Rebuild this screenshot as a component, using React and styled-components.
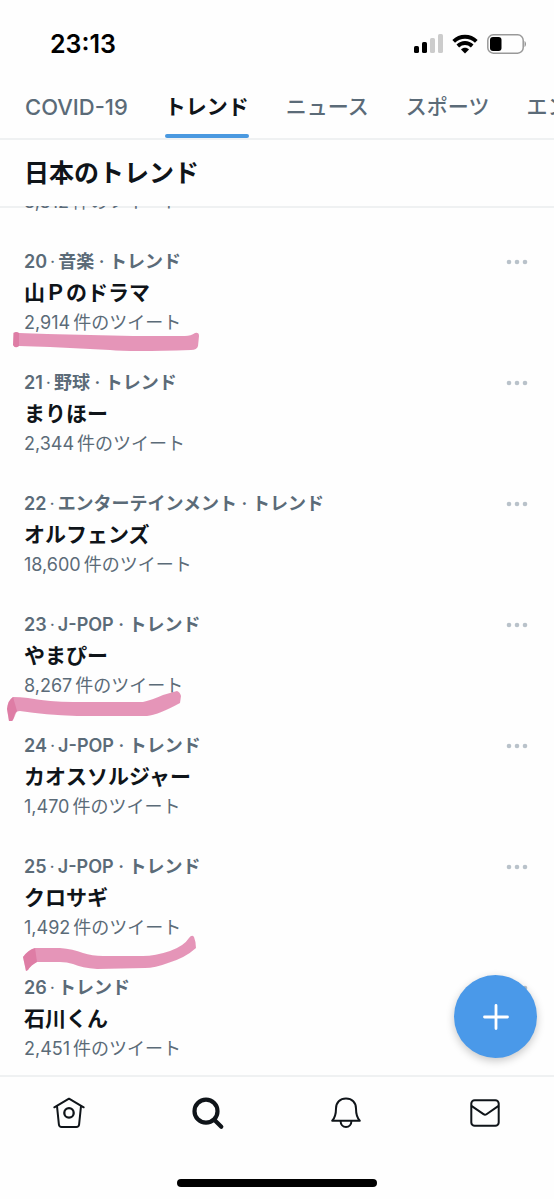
import React, { useState } from 'react';
import styled, { createGlobalStyle } from 'styled-components';

const GlobalStyle = createGlobalStyle`
  * {
    box-sizing: border-box;
  }
  body {
    margin: 0;
    background: #fefefe;
    color: #0f1419;
    font-family: Inter, 'Noto Sans CJK JP', sans-serif;
  }
  button {
    border: 0;
    padding: 0;
    background: none;
    color: inherit;
    font: inherit;
    cursor: pointer;
  }
`;

const Screen = styled.div`
  display: flex;
  flex-direction: column;
  height: 100vh;
  overflow: hidden;
`;

const StatusBar = styled.div`
  display: flex;
  align-items: center;
  justify-content: space-between;
  padding: 29px 28px 15px 50px;
`;

const Clock = styled.span`
  font-size: 25px;
  line-height: 30px;
  font-weight: 600;
  color: #000;
`;

const StatusIcons = styled.div`
  display: flex;
  align-items: center;
  gap: 9px;
`;

const Tabs = styled.nav`
  display: flex;
  flex: none;
  gap: 37px;
  height: 66px;
  padding-left: 25px;
  overflow: hidden;
  border-bottom: 2px solid #eff1f2;
`;

const Tab = styled.button`
  position: relative;
  flex: none;
  font-size: ${props => (props.$latin ? '22px' : '21px')};
  line-height: 66px;
  font-weight: ${props => (props.$active ? 700 : 500)};
  color: ${props => (props.$active ? '#0f1419' : '#5b6b78')};

  &::after {
    content: '';
    position: absolute;
    left: 0;
    right: 0;
    bottom: 0;
    height: 4px;
    border-radius: 2px;
    background: ${props => (props.$active ? '#4a99e0' : 'transparent')};
  }
`;

const Heading = styled.h1`
  flex: none;
  margin: 0;
  padding: 0 24px;
  font-size: 25px;
  line-height: 66px;
  font-weight: 700;
  border-bottom: 2px solid #eff1f2;
`;

const Main = styled.main`
  position: relative;
  display: flex;
  flex: 1;
  min-height: 0;
  margin-top: -2px;
  flex-direction: column;
  justify-content: flex-end;
  overflow: hidden;
`;

const List = styled.ul`
  display: flex;
  flex-direction: column;
  gap: 30px;
  margin: 0;
  padding: 0 0 11px;
  list-style: none;
`;

const Item = styled.li`
  position: relative;
  display: flex;
  align-items: flex-start;
  justify-content: space-between;
  padding: 0 26px 0 24px;
`;

const Meta = styled.div`
  font-size: 18px;
  line-height: 30px;
  font-weight: 600;
  color: #5b6b78;
`;

const Dot = styled.span`
  margin: 0 3px;
  font-weight: 400;
`;

const Name = styled.h2`
  margin: 0;
  font-size: 21px;
  line-height: 31px;
  font-weight: 700;
`;

const Count = styled.div`
  font-size: 18px;
  line-height: 30px;
  color: #5b6b78;
`;

const Amount = styled.span`
  margin-right: 3px;
`;

const More = styled.button`
  display: flex;
  align-items: center;
  height: 30px;
`;

const Marker = styled.svg`
  position: absolute;
  left: 0;
  top: 0;
  z-index: 1;
  overflow: visible;
  pointer-events: none;
`;

const Compose = styled.button`
  position: absolute;
  right: 17px;
  bottom: 17px;
  z-index: 2;
  display: flex;
  align-items: center;
  justify-content: center;
  width: 83px;
  height: 83px;
  border-radius: 50%;
  background: #4a99e9;
  box-shadow: 0 3px 8px rgba(0, 0, 0, 0.22);
`;

const BottomBar = styled.nav`
  display: flex;
  flex: none;
  border-top: 2px solid #eff1f2;
`;

const BottomItem = styled.button`
  display: flex;
  flex: 1;
  align-items: center;
  justify-content: center;
  height: 71px;
`;

const HomeIndicator = styled.div`
  flex: none;
  width: 36%;
  height: 8px;
  margin: 31px auto 12px;
  border-radius: 4px;
  background: #000;
`;

const tabs = [
  { label: 'COVID-19', latin: true },
  { label: 'トレンド' },
  { label: 'ニュース' },
  { label: 'スポーツ' },
  { label: 'エンタメ' },
];

const trends = [
  { amount: '8,812' },
  {
    rank: 20,
    topic: '音楽',
    name: '山Ｐのドラマ',
    amount: '2,914',
    marker: 'M14 88 Q16 86 19 88 L47 89 Q90 90 133 91 L185 91 Q191 91 195 88 Q199 87 199 91 L198 101 Q197 105 191 105 Q130 107 110 105 L50 102 L19 101 Q15 104 13 100 Z',
    cap: 'M13 88 Q16 86 19 88 L19 101 Q15 104 13 100 Z',
  },
  { rank: 21, topic: '野球', name: 'まりほー', amount: '2,344' },
  { rank: 22, topic: 'エンターテインメント', name: 'オルフェンズ', amount: '18,600' },
  {
    rank: 23,
    topic: 'J-POP',
    name: 'やまぴー',
    amount: '8,267',
    marker: 'M7 101 Q8 92 13 89 Q20 89 28 90 Q50 94 73 94 L143 94 Q152 92 163 87 L177 83 Q180 84 181 88 L180 95 Q158 107 147 108 L77 108 Q45 107 20 103 Q16 103 15 106 Q13 113 12 113 L9 113 Z',
    cap: 'M7 101 Q8 92 13 89 L17 103 Q13 113 12 113 L9 113 Z',
  },
  { rank: 24, topic: 'J-POP', name: 'カオスソルジャー', amount: '1,470' },
  {
    rank: 25,
    topic: 'J-POP',
    name: 'クロサギ',
    amount: '1,492',
    marker: 'M23 107 Q28 100 35 98 L60 98 Q73 99 83 103 Q92 106 103 106 L143 106 Q155 106 170 101 Q184 96 189 88 Q192 84 194 87 Q196 92 196 98 Q185 108 168 113 Q155 118 145 118 L97 119 Q82 118 73 114 Q67 112 60 112 L37 112 Q31 115 28 120 L26 121 Z',
    cap: 'M23 107 Q28 100 35 98 L37 112 Q31 115 28 120 L26 121 Z',
  },
  { rank: 26, name: '石川くん', amount: '2,451' },
];

const SignalIcon = () => (
  <svg width="29" height="20" viewBox="0 0 29 20" aria-hidden="true">
    <rect x="0" y="12" width="5" height="7" rx="1.6" />
    <rect x="8" y="8" width="5" height="11" rx="1.6" />
    <rect x="16" y="4" width="5" height="15" rx="1.6" fill="#ccc" />
    <rect x="24" y="0" width="5" height="19" rx="1.6" fill="#ccc" />
  </svg>
);

const WifiIcon = () => (
  <svg width="26" height="20" viewBox="0 0 26 20" aria-hidden="true">
    <g fill="none" stroke="#000" strokeWidth="3.8">
      <path d="M1.700 7.400C8 1.200 18 1.200 24.300 7.400" />
      <path d="M5.800 12c4.200-4 10.200-4 14.400 0" />
    </g>
    <path d="M13 19.600l-4-4.200c2-2.200 6-2.200 8 0z" />
  </svg>
);

const BatteryIcon = () => (
  <svg width="39" height="20" viewBox="0 0 39 20" aria-hidden="true">
    <rect x="0.8" y="0.8" width="35.4" height="18.4" rx="5.5" fill="none" stroke="#999" strokeWidth="1.5" />
    <rect x="3" y="3" width="11.5" height="14" rx="3" />
    <path d="M37.500 7c2 .8 2 5.200 0 6z" fill="#999" />
  </svg>
);

const MoreIcon = () => (
  <svg width="22" height="6" viewBox="0 0 22 6" fill="#b9c2ca" aria-hidden="true">
    <circle cx="3" cy="3" r="2.3" />
    <circle cx="11" cy="3" r="2.3" />
    <circle cx="19" cy="3" r="2.3" />
  </svg>
);

const PlusIcon = () => (
  <svg width="26" height="26" viewBox="0 0 26 26" aria-hidden="true">
    <path d="M13 1.500v23M1.500 13h23" stroke="#fff" strokeWidth="2.8" strokeLinecap="round" />
  </svg>
);

const iconProps = {
  width: 34,
  height: 34,
  viewBox: '0 0 34 34',
  fill: 'none',
  stroke: '#0f1419',
  strokeWidth: 2,
  strokeLinecap: 'round',
  strokeLinejoin: 'round',
  'aria-hidden': true,
};

const HomeIcon = () => (
  <svg {...iconProps}>
    <path d="M2.300 11.300L17 2.700l14.700 8.600" />
    <path d="M5 10.200l1.900 18.300a2.800 2.800 0 0 0 2.800 2.500h14.600a2.800 2.800 0 0 0 2.800-2.500L29 10.200" />
    <circle cx="17" cy="16.9" r="4.7" strokeWidth="2.3" />
  </svg>
);

const SearchIcon = () => (
  <svg {...iconProps}>
    <circle cx="15" cy="15.2" r="11.5" strokeWidth="4.2" />
    <path d="M24 24.400l6.300 6.300" strokeWidth="4.2" />
  </svg>
);

const BellIcon = () => (
  <svg {...iconProps}>
    <path d="M3.200 24.700C6.400 21.400 7 17.500 7 12.500C7 6.600 11 2.500 17 2.500s10 4.100 10 10c0 5 .6 8.900 3.800 12.200z" />
    <path d="M11.600 24.900c0 3.800 2.400 6 5.400 6s5.400-2.200 5.400-6" />
  </svg>
);

const MailIcon = () => (
  <svg {...iconProps}>
    <rect x="3.300" y="4.200" width="27.400" height="25.600" rx="3.400" />
    <path d="M3.800 10.200l11.700 8c1 .7 2 .7 3 0l11.700-8" />
  </svg>
);

const bottomItems = [
  { label: 'ホーム', Icon: HomeIcon },
  { label: '検索', Icon: SearchIcon },
  { label: '通知', Icon: BellIcon },
  { label: 'メッセージ', Icon: MailIcon },
];

const Trend = ({ rank, topic, name, amount, marker, cap }) => (
  <Item>
    <div>
      {rank && (
        <Meta>
          {rank}
          <Dot>·</Dot>
          {topic ? `${topic} · トレンド` : 'トレンド'}
        </Meta>
      )}
      {name && <Name>{name}</Name>}
      <Count>
        <Amount>{amount}</Amount>
        件のツイート
      </Count>
    </div>
    {rank && (
      <More aria-label="その他">
        <MoreIcon />
      </More>
    )}
    {marker && (
      <Marker width="200" height="122" viewBox="0 2 200 122" aria-hidden="true">
        <path d={marker} fill="#df7ba6" fillOpacity="0.8" />
        <path d={cap} fill="#d5608f" fillOpacity="0.45" />
      </Marker>
    )}
  </Item>
);

const App = () => {
  const [active, setActive] = useState('トレンド');
  return (
    <Screen>
      <GlobalStyle />
      <StatusBar>
        <Clock>23:13</Clock>
        <StatusIcons>
          <SignalIcon />
          <WifiIcon />
          <BatteryIcon />
        </StatusIcons>
      </StatusBar>
      <Tabs>
        {tabs.map(({ label, latin }) => (
          <Tab
            key={label}
            $latin={latin}
            $active={label === active}
            onClick={() => setActive(label)}
          >
            {label}
          </Tab>
        ))}
      </Tabs>
      <Heading>日本のトレンド</Heading>
      <Main>
        <List>
          {trends.map(trend => (
            <Trend key={trend.amount} {...trend} />
          ))}
        </List>
        <Compose aria-label="ツイートする">
          <PlusIcon />
        </Compose>
      </Main>
      <BottomBar>
        {bottomItems.map(({ label, Icon }) => (
          <BottomItem key={label} aria-label={label}>
            <Icon />
          </BottomItem>
        ))}
      </BottomBar>
      <HomeIndicator />
    </Screen>
  );
};

export default App;
